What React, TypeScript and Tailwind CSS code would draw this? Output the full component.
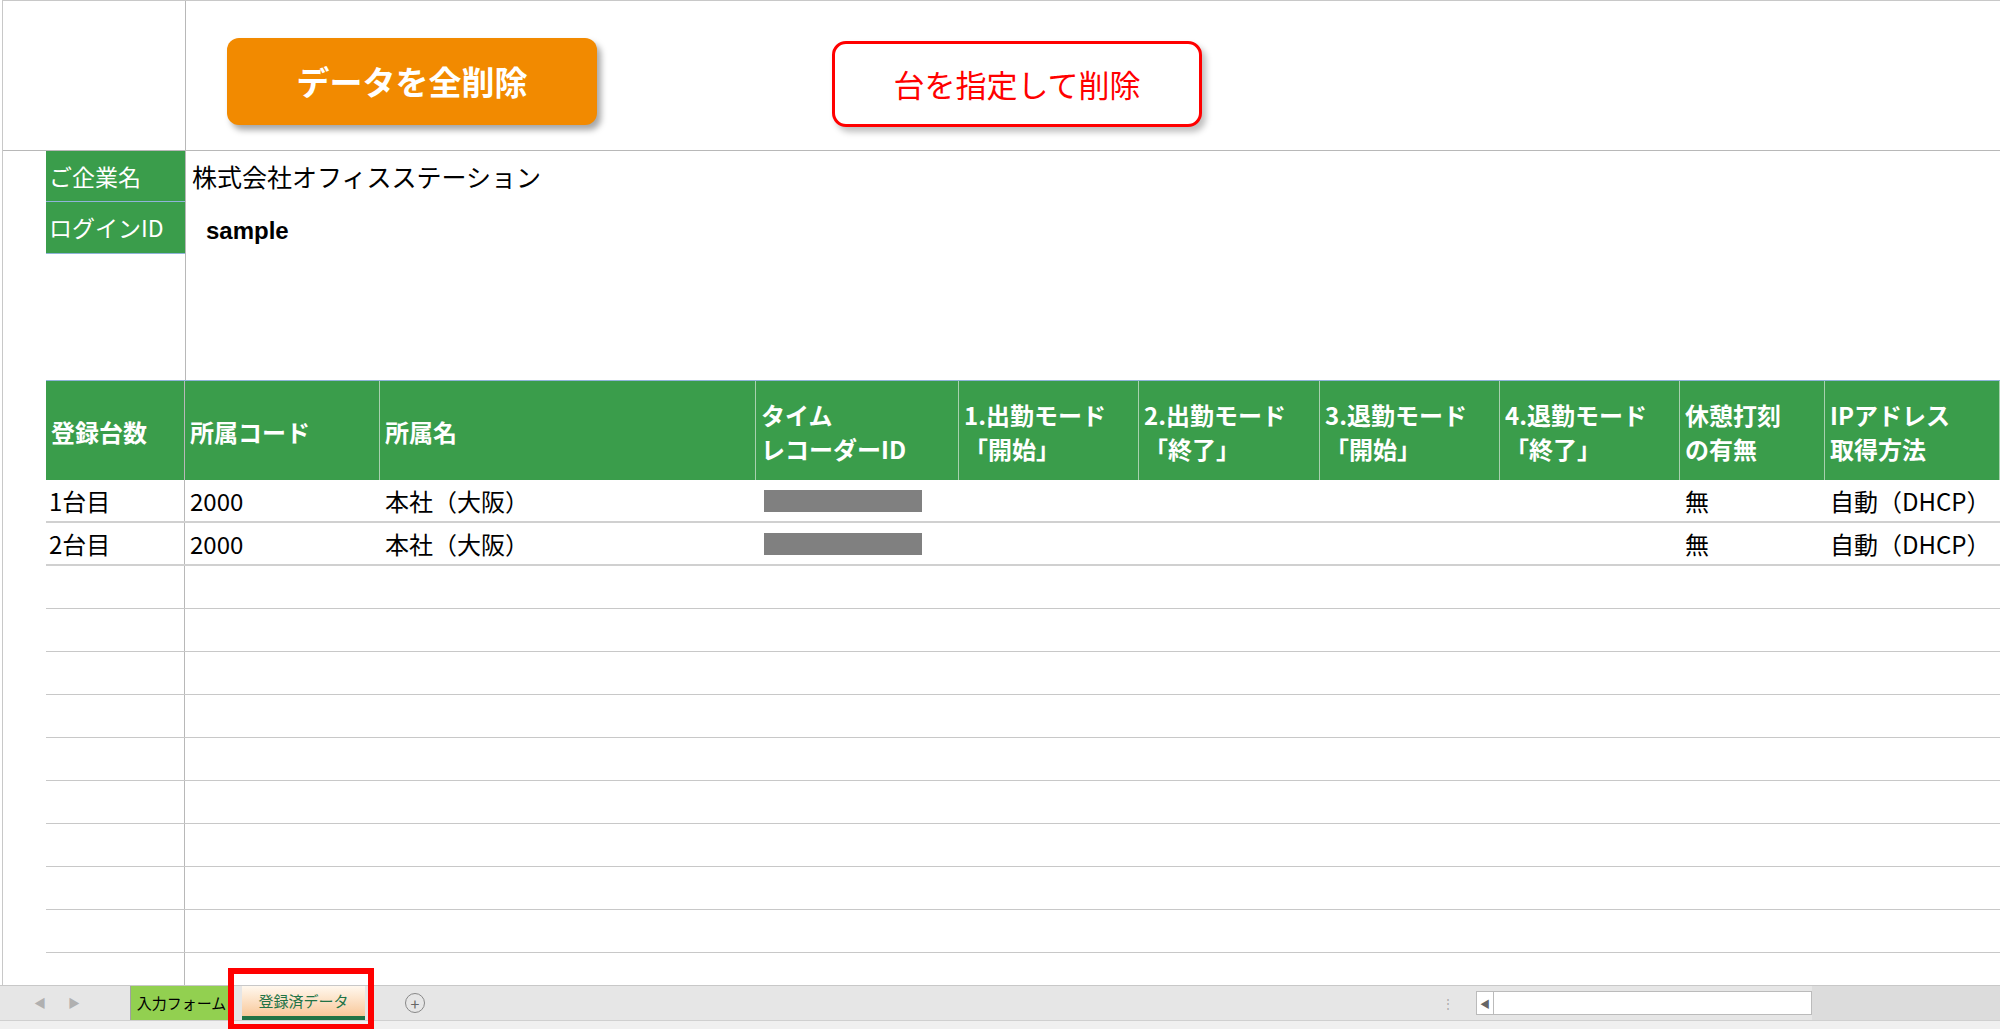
const font = { fontFamily: '"Noto Sans CJK JP", "Noto Sans", sans-serif' }

const cols = "grid grid-cols-[139px_195px_376px_203px_180px_181px_180px_180px_145px_175px]"

const headers = [
  ["登録台数"],
  ["所属コード"],
  ["所属名"],
  ["タイム", "レコーダーID"],
  ["1.出勤モード", "「開始」"],
  ["2.出勤モード", "「終了」"],
  ["3.退勤モード", "「開始」"],
  ["4.退勤モード", "「終了」"],
  ["休憩打刻", "の有無"],
  ["IPアドレス", "取得方法"],
]

const rows = [
  { no: "1台目", code: "2000", name: "本社（大阪）", rest: "無", ip: "自動（DHCP）" },
  { no: "2台目", code: "2000", name: "本社（大阪）", rest: "無", ip: "自動（DHCP）" },
]

export default function App() {
  return (
    <div className="w-[2000px] h-[1029px] bg-white overflow-hidden flex flex-col text-black" style={font}>
      <div className="h-[985px] flex flex-col ml-[2px] border-l border-t border-[#c8c8c8] overflow-hidden">
        {/* top buttons */}
        <div className="h-[150px] flex border-b border-[#b8b8b8] shrink-0">
          <div className="w-[183px] border-r border-[#b8b8b8]" />
          <div className="flex items-start pt-[37px]">
            <div className="ml-[41px] w-[370px] h-[87px] rounded-[12px] bg-[#f28a00] shadow-[4px_5px_6px_rgba(0,0,0,0.35)] flex items-center justify-center text-white font-bold text-[33px]">
              データを全削除
            </div>
            <div className="ml-[235px] mt-[3px] w-[370px] h-[86px] rounded-[14px] border-[3px] border-[#ff0000] bg-white shadow-[4px_5px_6px_rgba(0,0,0,0.25)] flex items-center justify-center text-[#ff0000] text-[31px]">
              台を指定して削除
            </div>
          </div>
        </div>

        {/* company info */}
        <div className="flex shrink-0">
          <div className="w-[43px]" />
          <div className="w-[140px] flex flex-col border-r border-[#b8b8b8]">
            <div className="h-[51px] bg-[#3a9d4b] text-white text-[23px] flex items-center pl-[3px] border-b border-[#8fb4d9]">ご企業名</div>
            <div className="h-[52px] bg-[#3a9d4b] text-white text-[23px] flex items-center pl-[3px] border-b border-[#8fb4d9]">ログインID</div>
            <div className="h-[126px]" />
          </div>
          <div className="flex-1 flex flex-col">
            <div className="h-[51px] text-[25px] flex items-center pl-[6px]">株式会社オフィスステーション</div>
            <div className="h-[58px] text-[24px] font-bold flex items-center pl-[20px]" style={{ fontFamily: '"Liberation Sans", sans-serif' }}>sample</div>
          </div>
        </div>

        {/* table */}
        <div className="flex flex-1">
          <div className="w-[43px] shrink-0" />
          <div className="flex-1 flex flex-col">
            <div className={`${cols} h-[100px] bg-[#3a9d4b] text-white font-bold text-[24px] leading-[34px] border-t border-[#8fb4d9] shrink-0`}>
              {headers.map((h, i) => (
                <div key={i} className={`flex flex-col justify-center pl-[5px] pt-[2px] border-r border-[#a8d0ae] whitespace-nowrap overflow-hidden ${i === 0 ? "border-[#b8b8b8]" : ""}`}>
                  {h.map((l) => (
                    <span key={l}>{l}</span>
                  ))}
                </div>
              ))}
            </div>
            {rows.map((r) => (
              <div key={r.no} className={`${cols} h-[43px] text-[24px] items-center border-b-2 border-[#d0d0d0] shrink-0`}>
                <div className="pl-[3px] h-full flex items-center border-r border-[#b8b8b8]">{r.no}</div>
                <div className="pl-[5px]">{r.code}</div>
                <div className="pl-[5px]">{r.name}</div>
                <div className="pl-[8px]"><div className="w-[158px] h-[22px] bg-[#808080]" /></div>
                <div /><div /><div /><div />
                <div className="pl-[5px]">{r.rest}</div>
                <div className="pl-[5px] whitespace-nowrap">{r.ip}</div>
              </div>
            ))}
            {Array.from({ length: 12 }).map((_, i) => (
              <div key={i} className={`${cols} h-[43px] border-b border-[#c8c8c8] shrink-0`}>
                <div className="border-r border-[#b8b8b8]" />
              </div>
            ))}
          </div>
        </div>
      </div>

      {/* sheet tabs */}
      <div className="h-[35px] bg-[#e6e6e6] border-t border-[#c8c8c8] flex items-center relative shrink-0">
        <span className="ml-[34px] text-[#b0b0b0] text-[12px]">◀</span>
        <span className="ml-[22px] text-[#b0b0b0] text-[12px]">▶</span>
        <div className="ml-[50px] h-full w-[102px] bg-[#92d050] border-l border-[#a0a0a0] flex items-center justify-center text-[15px]">入力フォーム</div>
        <div className="ml-[10px] h-full w-[123px] bg-gradient-to-b from-[#fff8ee] to-[#f8c89a] border-b-[4px] border-[#217346] flex items-center justify-center text-[15px] text-[#217346]">登録済データ</div>
        <div className="ml-[40px] w-[20px] h-[20px] rounded-full border border-[#888] flex items-center justify-center text-[#666] text-[16px] leading-none">+</div>
        <div className="absolute left-[228px] top-[-18px] w-[146px] h-[62px] border-[6px] border-[#ff0000]" />
        <div className="ml-auto mr-[188px] flex items-center">
          <span className="text-[#aaa] text-[12px] mr-[22px]">⋮</span>
          <div className="w-[336px] h-[24px] bg-white border border-[#bbb] flex items-center">
            <span className="text-[#666] text-[10px] px-[3px] border-r border-[#bbb] h-full flex items-center">◀</span>
          </div>
        </div>
        <div className="absolute right-0 top-0 w-[188px] h-full bg-[#dcdcdc]" />
      </div>
      <div className="flex-1 bg-[#f0f0f0] border-t border-[#d0d0d0]" />
    </div>
  )
}
